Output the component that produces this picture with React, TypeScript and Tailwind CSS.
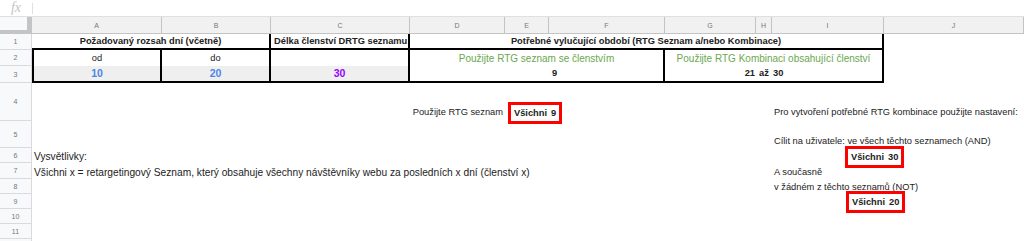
import type { ReactNode } from "react";

const rowHeads = [
  { n: "1", h: "h-[16px]" },
  { n: "2", h: "h-[16px]" },
  { n: "3", h: "h-[17px]" },
  { n: "4", h: "h-[38px]" },
  { n: "5", h: "h-[27px]" },
  { n: "6", h: "h-[15px]" },
  { n: "7", h: "h-[16px]" },
  { n: "8", h: "h-[15px]" },
  { n: "9", h: "h-[15px]" },
  { n: "10", h: "h-[15px]" },
  { n: "11", h: "h-[15px]" },
];

const cols = [
  { l: "A", w: "w-[130px]" },
  { l: "B", w: "w-[109px]" },
  { l: "C", w: "w-[139px]" },
  { l: "D", w: "w-[95px]" },
  { l: "E", w: "w-[44px]" },
  { l: "F", w: "w-[116px]" },
  { l: "G", w: "w-[91px]" },
  { l: "H", w: "w-[16px]" },
  { l: "I", w: "w-[112px]" },
  { l: "J", w: "w-[140px]" },
];

function Row({ n, h, children }: { n: string; h: string; children?: ReactNode }) {
  return (
    <div className={`flex ${h}`}>
      <div className="w-[32px] shrink-0 bg-[#f8f9fa] border-r border-b border-[#dadada] flex items-center justify-center text-[7px] text-[#777]">
        {n}
      </div>
      {children}
    </div>
  );
}

function RedBox({ children, className = "" }: { children: ReactNode; className?: string }) {
  return (
    <div
      className={`h-[22px] border-[3px] border-[#ff0000] bg-white px-[3px] flex items-center font-bold whitespace-nowrap ${className}`}
    >
      {children}
    </div>
  );
}

export default function App() {
  return (
    <div className="w-[1024px] h-[241px] overflow-hidden bg-white font-['Liberation_Sans',Arial,sans-serif] text-[9.3px] leading-[11px] text-[#222]">
      {/* formula bar */}
      <div className="h-[17px] flex items-center border-b border-[#e0e0e0]">
        <div className="w-[32px] flex justify-center text-[14px] italic font-['Liberation_Serif',serif] text-[#c4c4c4] leading-none">
          fx
        </div>
        <div className="h-[11px] border-l border-[#e0e0e0]" />
      </div>

      {/* column headers */}
      <div className="flex h-[17px]">
        <div className="w-[32px] shrink-0 bg-[#f8f9fa] border-r-[5px] border-b-[4px] border-[#c4c4c4]" />
        {cols.map((c) => (
          <div
            key={c.l}
            className={`${c.w} shrink-0 bg-[#f1f1f1] border-r border-b border-[#c4c4c4] flex items-center justify-center text-[7px] text-[#777]`}
          >
            {c.l}
          </div>
        ))}
      </div>

      {/* row 1 */}
      <Row {...rowHeads[0]}>
        <div className="w-[239px] shrink-0 border-b-2 border-r-2 border-black flex items-center justify-center font-bold whitespace-nowrap">
          Požadovaný rozsah dní (včetně)
        </div>
        <div className="w-[139px] shrink-0 border-b-2 border-r-2 border-black flex items-center pl-[3px] font-bold whitespace-nowrap overflow-hidden">
          Délka členství DRTG seznamu
        </div>
        <div className="w-[474px] shrink-0 border-b-2 border-r-2 border-black flex items-center justify-center font-bold whitespace-nowrap">
          Potřebné vylučující období (RTG Seznam a/nebo Kombinace)
        </div>
      </Row>

      {/* row 2 */}
      <Row {...rowHeads[1]}>
        <div className="w-[130px] shrink-0 border-l-2 border-r-2 border-black flex items-center justify-center">od</div>
        <div className="w-[109px] shrink-0 border-r-2 border-black flex items-center justify-center">do</div>
        <div className="w-[139px] shrink-0 border-r-2 border-black" />
        <div className="w-[255px] shrink-0 border-r-2 border-black flex items-center justify-center text-[10px] text-[#6aa84f] whitespace-nowrap">
          Použijte RTG seznam se členstvím
        </div>
        <div className="w-[219px] shrink-0 border-r-2 border-black flex items-center justify-center text-[10px] text-[#6aa84f] whitespace-nowrap">
          Použijte RTG Kombinaci obsahující členství
        </div>
      </Row>

      {/* row 3 */}
      <Row {...rowHeads[2]}>
        <div className="w-[130px] shrink-0 bg-[#efefef] border-l-2 border-r-2 border-b-2 border-black flex items-center justify-center font-bold text-[10.5px] text-[#4a86e8]">
          10
        </div>
        <div className="w-[109px] shrink-0 bg-[#efefef] border-r-2 border-b-2 border-black flex items-center justify-center font-bold text-[10.5px] text-[#4a86e8]">
          20
        </div>
        <div className="w-[139px] shrink-0 bg-[#efefef] border-r-2 border-b-2 border-black flex items-center justify-center font-bold text-[10.5px] text-[#9900ff]">
          30
        </div>
        <div className="w-[255px] shrink-0 border-r-2 border-b-2 border-black flex items-center justify-center pl-[36px] font-bold">
          9
        </div>
        <div className="w-[91px] shrink-0 border-b-2 border-black flex items-center justify-end pr-[1px] font-bold">21</div>
        <div className="w-[16px] shrink-0 border-b-2 border-black flex items-center justify-center font-bold">až</div>
        <div className="w-[112px] shrink-0 border-r-2 border-b-2 border-black flex items-center pl-[1px] font-bold">30</div>
      </Row>

      {/* row 4 */}
      <Row {...rowHeads[3]}>
        <div className="w-[378px] shrink-0" />
        <div className="w-[95px] shrink-0 flex items-end justify-end pr-[2px] pb-[3px] whitespace-nowrap">
          Použijte RTG seznam
        </div>
        <div className="w-[160px] shrink-0 flex items-end pl-[3px]">
          <RedBox className="-mb-[3px]">
            Všichni<span className="ml-[4px]">9</span>
          </RedBox>
        </div>
        <div className="w-[107px] shrink-0" />
        <div className="w-[252px] shrink-0 flex items-end pl-[2px] pb-[3px] whitespace-nowrap">
          Pro vytvoření potřebné RTG kombinace použijte nastavení:
        </div>
      </Row>

      {/* row 5 */}
      <Row {...rowHeads[4]}>
        <div className="w-[740px] shrink-0" />
        <div className="w-[252px] shrink-0 flex items-end pl-[2px] pb-[1px] whitespace-nowrap">
          Cílit na uživatele: ve všech těchto seznamech (AND)
        </div>
      </Row>

      {/* row 6 */}
      <Row {...rowHeads[5]}>
        <div className="w-[740px] shrink-0 flex items-end pl-[2px] pb-[1px] text-[10.2px] whitespace-nowrap">Vysvětlivky:</div>
        <div className="w-[252px] shrink-0 flex items-end pl-[73px]">
          <RedBox className="-mb-[5px]">
            Všichni<span className="ml-[4px]">30</span>
          </RedBox>
        </div>
      </Row>

      {/* row 7 */}
      <Row {...rowHeads[6]}>
        <div className="w-[740px] shrink-0 flex items-end pl-[2px] pb-[1px] text-[10.2px] whitespace-nowrap">
          Všichni x = retargetingový Seznam, který obsahuje všechny návštěvníky webu za posledních x dní (členství x)
        </div>
        <div className="w-[252px] shrink-0 flex items-end pl-[2px] pb-[1px] whitespace-nowrap">A současně</div>
      </Row>

      {/* row 8 */}
      <Row {...rowHeads[7]}>
        <div className="w-[740px] shrink-0" />
        <div className="w-[252px] shrink-0 flex items-end pl-[2px] pb-[1px] whitespace-nowrap">
          v žádném z těchto seznamů (NOT)
        </div>
      </Row>

      {/* row 9 */}
      <Row {...rowHeads[8]}>
        <div className="w-[740px] shrink-0" />
        <div className="w-[252px] shrink-0 flex items-end pl-[74px]">
          <RedBox className="-mb-[4px]">
            Všichni<span className="ml-[4px]">20</span>
          </RedBox>
        </div>
      </Row>

      <Row {...rowHeads[9]} />
      <Row {...rowHeads[10]} />
      <Row n="" h="h-[15px]" />
    </div>
  );
}
